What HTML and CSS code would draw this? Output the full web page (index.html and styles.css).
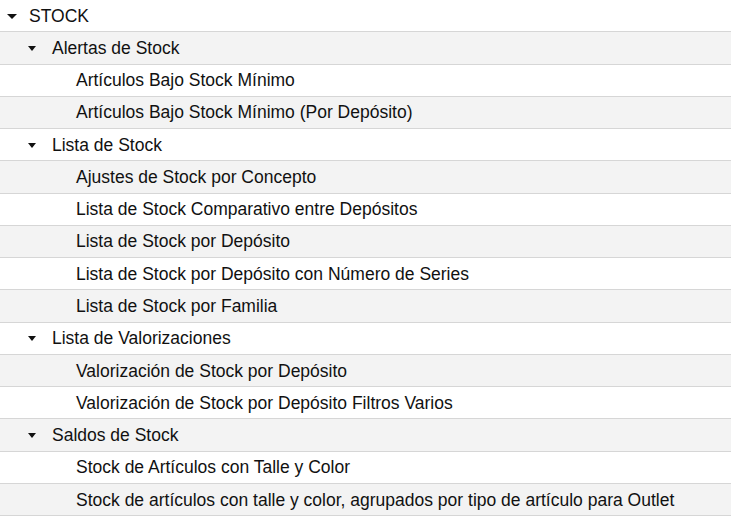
FILE: index.html
```html
<!DOCTYPE html>
<html lang="es">
<head>
  <meta charset="UTF-8" />
  <meta name="viewport" content="width=device-width, initial-scale=1.0"/>
  <title>Reportes de Stock</title>
  <link rel="stylesheet" href="styles.css">
</head>
<body>
  <ul class="arbol">
    <li class="fila nivel-0"><span class="flecha"></span>STOCK</li>
    <li class="fila nivel-1"><span class="flecha"></span>Alertas de Stock</li>
    <li class="fila nivel-2">Artículos Bajo Stock Mínimo</li>
    <li class="fila nivel-2">Artículos Bajo Stock Mínimo (Por Depósito)</li>
    <li class="fila nivel-1"><span class="flecha"></span>Lista de Stock</li>
    <li class="fila nivel-2">Ajustes de Stock por Concepto</li>
    <li class="fila nivel-2">Lista de Stock Comparativo entre Depósitos</li>
    <li class="fila nivel-2">Lista de Stock por Depósito</li>
    <li class="fila nivel-2">Lista de Stock por Depósito con Número de Series</li>
    <li class="fila nivel-2">Lista de Stock por Familia</li>
    <li class="fila nivel-1"><span class="flecha"></span>Lista de Valorizaciones</li>
    <li class="fila nivel-2">Valorización de Stock por Depósito</li>
    <li class="fila nivel-2">Valorización de Stock por Depósito Filtros Varios</li>
    <li class="fila nivel-1"><span class="flecha"></span>Saldos de Stock</li>
    <li class="fila nivel-2">Stock de Artículos con Talle y Color</li>
    <li class="fila nivel-2">Stock de artículos con talle y color, agrupados por tipo de artículo para Outlet</li>
  </ul>
</body>
</html>
```

FILE: styles.css
```css
:root {
  --fondo-par: #f3f3f3;
  --borde: #d6d6d6;
  --texto: #111;
}

* {
  margin: 0;
  padding: 0;
  box-sizing: border-box;
}

body {
  font-family: 'Liberation Sans', Arial, sans-serif;
  font-size: 17.5px;
  color: var(--texto);
  background-color: #fff;
}

.arbol {
  list-style: none;
}

.fila {
  display: flex;
  align-items: center;
  height: 32.27px;
  border-bottom: 1px solid var(--borde);
  padding-top: 1px;
  white-space: nowrap;
}

.fila:nth-child(even) {
  background-color: var(--fondo-par);
}

.nivel-0 {
  padding-left: 7px;
}

.nivel-1 {
  padding-left: 28px;
}

.nivel-2 {
  padding-left: 76px;
}

/* triangulo de expandir */
.flecha {
  width: 0;
  height: 0;
  border-left: 5px solid transparent;
  border-right: 5px solid transparent;
  border-top: 5px solid var(--texto);
  margin-right: 12px;
}

.nivel-1 .flecha {
  border-left-width: 4.5px;
  border-right-width: 4.5px;
  margin-right: 16px;
}
```
